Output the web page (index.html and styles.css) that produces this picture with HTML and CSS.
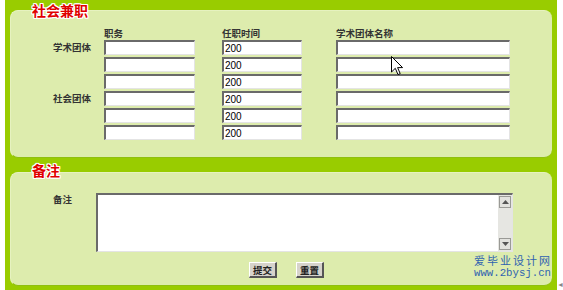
FILE: index.html
```html
<!DOCTYPE html>
<html lang="zh">
<head>
<meta charset="utf-8">
<title>社会兼职</title>
<link rel="stylesheet" href="styles.css">
</head>
<body>
<div class="frame">
  <section class="panel panel-jobs">
    <h2 class="panel-title">社会兼职</h2>
    <div class="jobs-grid">
      <div class="head c2">职务</div>
      <div class="head c3">任职时间</div>
      <div class="head c4">学术团体名称</div>

      <div class="row-label r2">学术团体</div>
      <div class="row-label r5">社会团体</div>

      <input class="field w-duty" type="text"><input class="field w-time" type="text" value="200"><input class="field w-name" type="text">
      <input class="field w-duty" type="text"><input class="field w-time" type="text" value="200"><input class="field w-name" type="text">
      <input class="field w-duty" type="text"><input class="field w-time" type="text" value="200"><input class="field w-name" type="text">
      <input class="field w-duty" type="text"><input class="field w-time" type="text" value="200"><input class="field w-name" type="text">
      <input class="field w-duty" type="text"><input class="field w-time" type="text" value="200"><input class="field w-name" type="text">
      <input class="field w-duty" type="text"><input class="field w-time" type="text" value="200"><input class="field w-name" type="text">
    </div>
  </section>

  <section class="panel panel-memo">
    <h2 class="panel-title">备注</h2>
    <div class="memo-row">
      <div class="memo-label">备注</div>
      <div class="memo-box">
        <textarea class="memo-text"></textarea>
        <div class="scrollbar">
          <span class="sb-btn"><svg width="7" height="4" viewBox="0 0 7 4"><path d="M0 4 L3.5 0 L7 4 Z" fill="#555"/></svg></span>
          <span class="sb-track"></span>
          <span class="sb-btn"><svg width="7" height="4" viewBox="0 0 7 4"><path d="M0 0 L3.5 4 L7 0 Z" fill="#555"/></svg></span>
        </div>
      </div>
    </div>
    <div class="buttons">
      <button class="btn" type="button">提交</button>
      <button class="btn" type="button">重置</button>
    </div>
  </section>
</div>

<div class="watermark">
  <div class="wm-cn">爱毕业设计网</div>
  <div class="wm-en">www.2bysj.cn</div>
</div>

<svg class="cursor" width="13" height="20" viewBox="0 0 13 20"><path d="M0.5 0.5 L0.5 16 L4.3 12.3 L7 18.6 L9.2 17.6 L6.6 11.6 L11.6 11.6 Z" fill="#fff" stroke="#000" stroke-width="1"/></svg>
<span class="corner-mark">◄</span>
</body>
</html>
```
FILE: styles.css
```css
* { box-sizing: border-box; }
html, body { margin: 0; padding: 0; }
body {
  width: 563px;
  height: 290px;
  background: #ffffff;
  font-family: "Noto Sans CJK SC", "Liberation Sans", sans-serif;
  color: #333;
  position: relative;
  overflow: hidden;
}
.frame {
  margin-left: 5px;
  width: 552px;
  height: 290px;
  background: #99cc00;
  padding: 10px 5px 0 5px;
  display: flex;
  flex-direction: column;
  gap: 14px;
}
.panel {
  position: relative;
  background: #ddecad;
  border-radius: 8px;
  border-top: 1px solid #e6f2c0;
  border-left: 1px solid #e6f2c0;
  border-bottom: 1px solid #8fbf10;
}
.panel-jobs { height: 148px; padding-top: 17px; }
.panel-memo { height: 114px; padding-top: 20px; }
.panel-title {
  position: absolute;
  left: 21px;
  top: -9px;
  margin: 0;
  font-size: 14px;
  line-height: 16px;
  font-weight: bold;
  color: #e00000;
  text-shadow: 1px 0 0 #fff, -1px 0 0 #fff, 0 1px 0 #fff, 0 -1px 0 #fff, 1px 1px 0 #fff, -1px -1px 0 #fff, 1px -1px 0 #fff, -1px 1px 0 #fff;
}
.panel-memo .panel-title { top: -11px; }

.jobs-grid {
  display: grid;
  grid-template-columns: 93px 118px 114px 174px;
  grid-template-rows: 12px repeat(6, 17px);
}
.head {
  grid-row: 1;
  font-size: 9.5px;
  line-height: 11px;
  color: #333;
  font-weight: bold;
}
.c2 { grid-column: 2; }
.c3 { grid-column: 3; }
.c4 { grid-column: 4; }
.row-label {
  grid-column: 1;
  font-size: 9.5px;
  line-height: 15px;
  padding-left: 42px;
  font-weight: bold;
  color: #333;
}
.r2 { grid-row: 2; }
.r5 { grid-row: 5; }
.field {
  height: 15px;
  margin: 0;
  padding: 0 1px;
  background: #fff;
  border-top: 2px solid #6a6a6a;
  border-left: 2px solid #6a6a6a;
  border-right: 1px solid #e4e4e4;
  border-bottom: 1px solid #e4e4e4;
  font-family: "Liberation Sans", sans-serif;
  font-size: 10px;
  color: #000;
  outline: none;
}
.w-duty { width: 91px; grid-column: 2; }
.w-time { width: 80px; grid-column: 3; }
.w-name { width: 174px; grid-column: 4; }

.memo-row {
  display: flex;
}
.memo-label {
  width: 85px;
  padding-left: 42px;
  font-size: 9.5px;
  line-height: 12px;
  font-weight: bold;
  color: #333;
}
.memo-box {
  width: 417px;
  height: 59px;
  display: flex;
  background: #fff;
  border-top: 2px solid #6a6a6a;
  border-left: 2px solid #6a6a6a;
  border-right: 1px solid #e4e4e4;
  border-bottom: 1px solid #e4e4e4;
}
.memo-text {
  flex: 1;
  border: none;
  resize: none;
  outline: none;
  margin: 0;
  padding: 1px;
  background: #fff;
}
.scrollbar {
  width: 14px;
  display: flex;
  flex-direction: column;
  background: #e6e6e2;
  padding: 1px 1px;
}
.sb-btn {
  width: 12px;
  height: 12px;
  background: #e2e2de;
  border: 1px solid #9a9a96;
  display: flex;
  align-items: center;
  justify-content: center;
}
.sb-track { flex: 1; }

.buttons {
  display: flex;
  gap: 19px;
  padding-left: 238px;
  margin-top: 10px;
}
.btn {
  width: 28px;
  height: 16px;
  padding: 0;
  margin: 0;
  font-family: "Noto Sans CJK SC", sans-serif;
  font-size: 9.5px;
  line-height: 12px;
  font-weight: bold;
  color: #222;
  background: #d6d3cb;
  border-top: 1px solid #fff;
  border-left: 1px solid #fff;
  border-right: 2px solid #555;
  border-bottom: 2px solid #555;
}

.watermark {
  position: absolute;
  left: 474px;
  top: 254px;
  color: #2f63b0;
}
.wm-cn {
  font-family: "Noto Sans CJK SC", serif;
  font-size: 11px;
  line-height: 13px;
  letter-spacing: 2px;
}
.wm-en {
  font-family: "Liberation Mono", monospace;
  font-size: 10.7px;
  line-height: 13px;
}
.cursor {
  position: absolute;
  left: 391px;
  top: 56px;
}
.corner-mark {
  position: absolute;
  left: 557px;
  top: 280px;
  font-size: 7px;
  line-height: 8px;
  color: #888;
}
```
